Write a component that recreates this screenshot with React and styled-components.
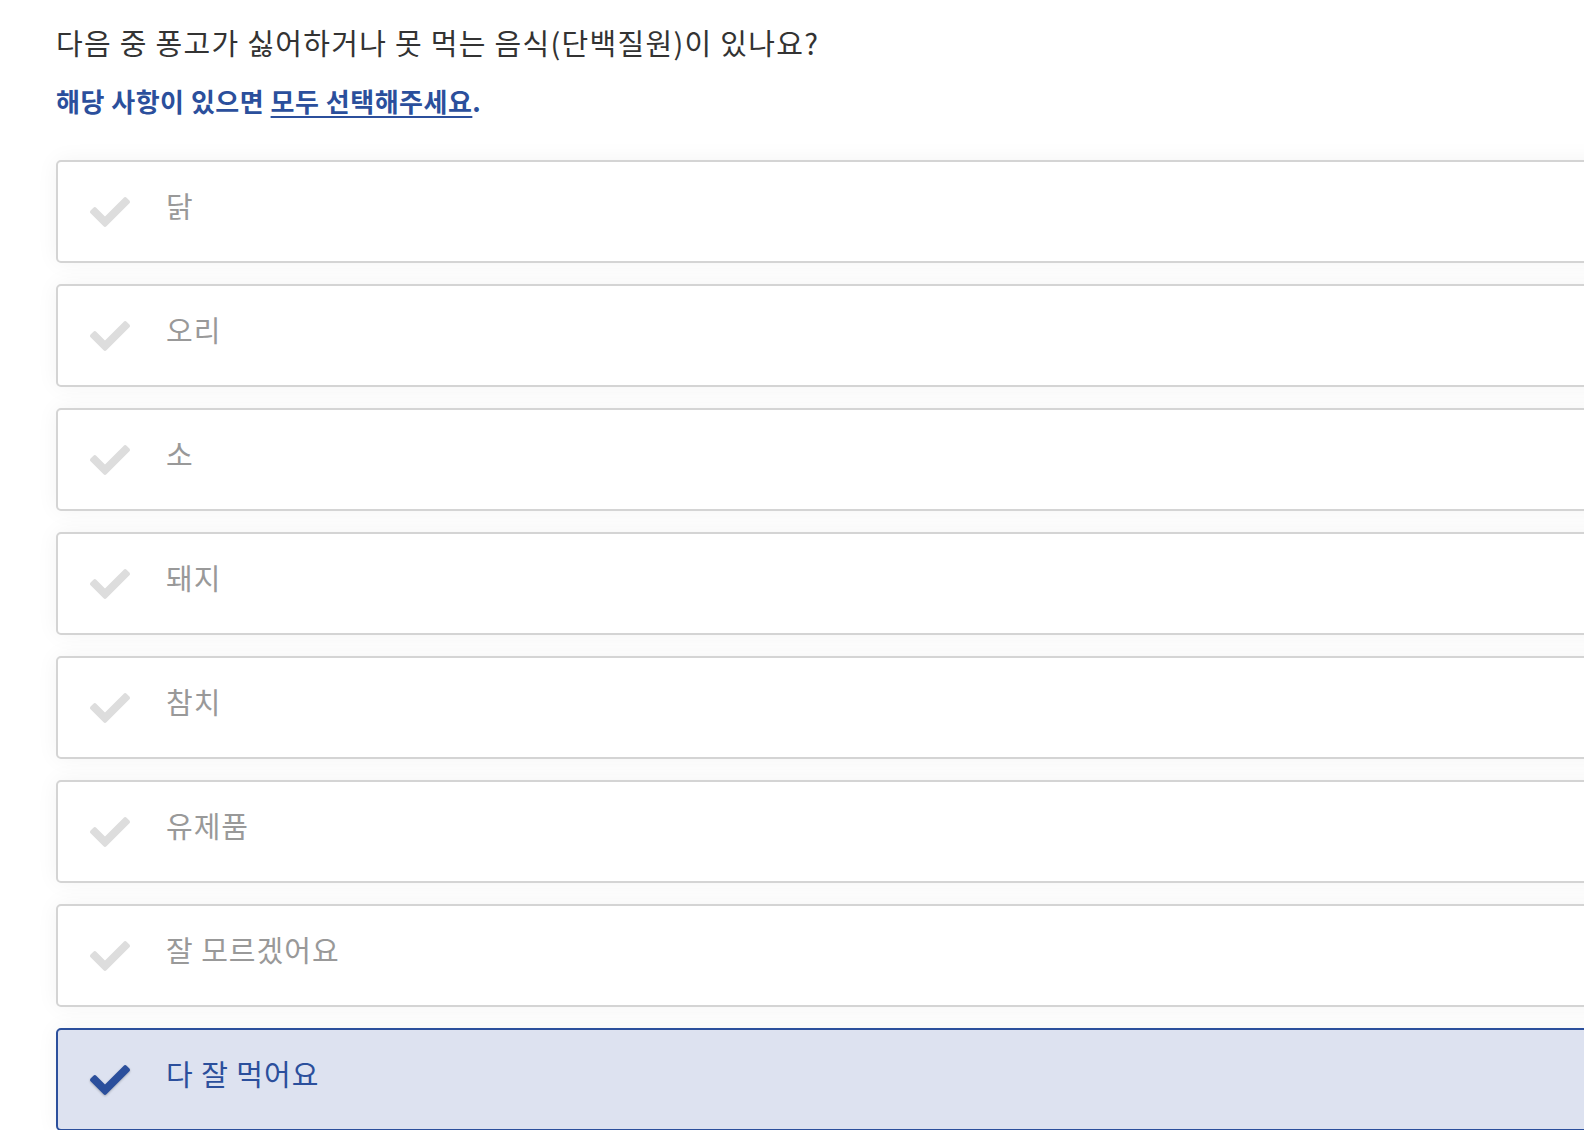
import styled, { createGlobalStyle } from "styled-components";
import { FaCheck } from "react-icons/fa";

const BLUE = "#2b4f9c";

const GlobalStyle = createGlobalStyle`
  html, body {
    margin: 0;
    padding: 0;
    background: #fff;
    overflow: hidden;
  }
  body {
    font-family: "Noto Sans CJK KR", "Noto Sans", sans-serif;
  }
`;

const Page = styled.div`
  padding: 22px 0 0 56px;
  width: 1600px;
`;

const Title = styled.h1`
  margin: 0;
  font-size: 29px;
  font-weight: 400;
  line-height: 40px;
  color: #333;
  letter-spacing: 1.3px;
`;

const Hint = styled.p`
  margin: 22px 0 0;
  font-size: 26px;
  font-weight: 700;
  line-height: 34px;
  color: ${BLUE};
  letter-spacing: 0.5px;

  & u {
    text-underline-offset: 4px;
    text-decoration-thickness: 2px;
  }
`;

const List = styled.div`
  margin-top: 42px;
  display: flex;
  flex-direction: column;
  gap: 21px;
`;

const Option = styled.div`
  display: flex;
  align-items: center;
  height: 103px;
  box-sizing: border-box;
  border: 2px solid ${(p) => (p.$selected ? BLUE : "#d4d4d4")};
  border-radius: 5px;
  background: ${(p) => (p.$selected ? "#dde2f0" : "#fff")};
  box-shadow: 0 0 22px rgba(0, 0, 0, 0.05);
  padding-left: 31px;
`;

const Check = styled.span`
  display: flex;
  width: 42px;
  justify-content: center;
  color: ${(p) => (p.$selected ? BLUE : "#dddddd")};
  filter: ${(p) => (p.$selected ? "drop-shadow(0 1px 1px rgba(0,0,0,0.25))" : "none")};
`;

const Label = styled.span`
  margin-left: 35px;
  padding-bottom: 12px;
  font-size: 29px;
  letter-spacing: 1px;
  color: ${(p) => (p.$selected ? BLUE : "#999")};
  line-height: 1;
`;

const options = [
  { label: "닭" },
  { label: "오리" },
  { label: "소" },
  { label: "돼지" },
  { label: "참치" },
  { label: "유제품" },
  { label: "잘 모르겠어요" },
  { label: "다 잘 먹어요", selected: true },
];

export default function App() {
  return (
    <>
      <GlobalStyle />
      <Page>
        <Title>다음 중 퐁고가 싫어하거나 못 먹는 음식(단백질원)이 있나요?</Title>
        <Hint>
          해당 사항이 있으면 <u>모두 선택해주세요</u>.
        </Hint>
        <List>
          {options.map((o) => (
            <Option key={o.label} $selected={o.selected}>
              <Check $selected={o.selected}>
                <FaCheck size={40} />
              </Check>
              <Label $selected={o.selected}>{o.label}</Label>
            </Option>
          ))}
        </List>
      </Page>
    </>
  );
}
